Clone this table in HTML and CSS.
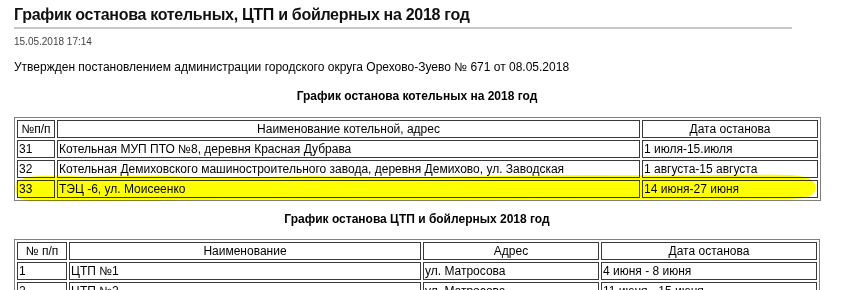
FILE: index.html
```html
<!DOCTYPE html>
<html lang="ru">
<head>
<meta charset="utf-8">
<title>График останова</title>
<link rel="stylesheet" href="styles.css">
</head>
<body>
<div class="page">
  <h1 class="title">График останова котельных, ЦТП и бойлерных на 2018 год</h1>
  <div class="date">15.05.2018 17:14</div>
  <p class="lead">Утвержден постановлением администрации городского округа Орехово-Зуево № 671 от 08.05.2018</p>

  <h2 class="sub sub-first">График останова котельных на 2018 год</h2>
  <div class="table-wrap">
    <table class="grid">
      <tr>
        <td class="c h t1c1">№п/п</td>
        <td class="c h t1c2">Наименование котельной, адрес</td>
        <td class="c h t1c3">Дата останова</td>
      </tr>
      <tr>
        <td class="c">31</td>
        <td class="c">Котельная МУП ПТО №8, деревня Красная Дубрава</td>
        <td class="c">1 июля-15.июля</td>
      </tr>
      <tr>
        <td class="c">32</td>
        <td class="c">Котельная Демиховского машиностроительного завода, деревня Демихово, ул. Заводская</td>
        <td class="c">1 августа-15 августа</td>
      </tr>
      <tr>
        <td class="c">33</td>
        <td class="c">ТЭЦ -6, ул. Моисеенко</td>
        <td class="c">14 июня-27 июня</td>
      </tr>
    </table>
    <svg class="marker" viewBox="12 172 808 34" width="808" height="34" aria-hidden="true">
      <path fill="#ffff00" d="M 16 184 C 20 177, 40 176, 70 177 C 100 179, 120 176, 160 177 C 200 178, 230 180, 270 178 C 320 176, 360 179, 420 178 C 480 177, 540 176, 600 176 C 680 177, 740 175, 790 176 C 812 177, 818 184, 815 192 C 812 199, 800 200, 780 200 C 700 201, 600 200, 500 201 C 400 202, 300 200, 200 201 C 120 202, 60 203, 30 202 C 18 201, 14 196, 16 184 Z"/>
    </svg>
  </div>

  <h2 class="sub">График останова ЦТП и бойлерных 2018 год</h2>
  <table class="grid">
    <tr>
      <td class="c h t2c1">№ п/п</td>
      <td class="c h t2c2">Наименование</td>
      <td class="c h t2c3">Адрес</td>
      <td class="c h t2c4">Дата останова</td>
    </tr>
    <tr>
      <td class="c">1</td>
      <td class="c">ЦТП №1</td>
      <td class="c">ул. Матросова</td>
      <td class="c">4 июня - 8 июня</td>
    </tr>
    <tr>
      <td class="c">2</td>
      <td class="c">ЦТП №2</td>
      <td class="c">ул. Матросова</td>
      <td class="c">11 июня - 15 июня</td>
    </tr>
  </table>
</div>
</body>
</html>
```

FILE: styles.css
```css
html, body {
  margin: 0;
  padding: 0;
  background: #fff;
}
body {
  font-family: "Liberation Sans", Arial, sans-serif;
  color: #000;
}
.page {
  padding: 3px 0 0 14px;
}
.title {
  margin: 0;
  width: 778px;
  font-size: 16px;
  letter-spacing: -0.3px;
  line-height: 24px;
  font-weight: bold;
  color: #111;
  border-bottom: 2px solid #c8c8c8;
}
.date {
  margin-top: 6px;
  font-size: 10px;
  line-height: 14px;
  color: #444;
}
.lead {
  margin: 10px 0 0 0;
  font-size: 12px;
  line-height: 16px;
}
.sub {
  margin: 0;
  width: 806px;
  text-align: center;
  font-size: 12px;
  line-height: 16px;
  font-weight: bold;
}
.sub-first {
  margin-top: 13px;
  margin-bottom: 13px;
}
.table-wrap {
  position: relative;
  width: 806px;
}
.marker {
  position: absolute;
  left: -2px;
  top: 54px;
  mix-blend-mode: multiply;
  pointer-events: none;
}
.grid {
  table-layout: fixed;
  border-collapse: separate;
  border-spacing: 2px;
  border: 1px solid #808080;
  width: 806px;
  font-size: 12px;
  line-height: 16px;
}
.table-wrap + .sub {
  margin-top: 10px;
  margin-bottom: 12px;
}
.c {
  box-sizing: border-box;
  border: 1px solid #3a3a3a;
  padding: 0 1px;
  text-align: left;
  vertical-align: middle;
  white-space: nowrap;
  overflow: hidden;
}
.h {
  text-align: center;
}
.t1c1 { width: 38px; }
.t1c2 { width: 583px; }
.t1c3 { width: 176px; }
.t2c1 { width: 50px; }
.t2c2 { width: 352px; }
.t2c3 { width: 176px; }
.t2c4 { width: 216px; }
```
